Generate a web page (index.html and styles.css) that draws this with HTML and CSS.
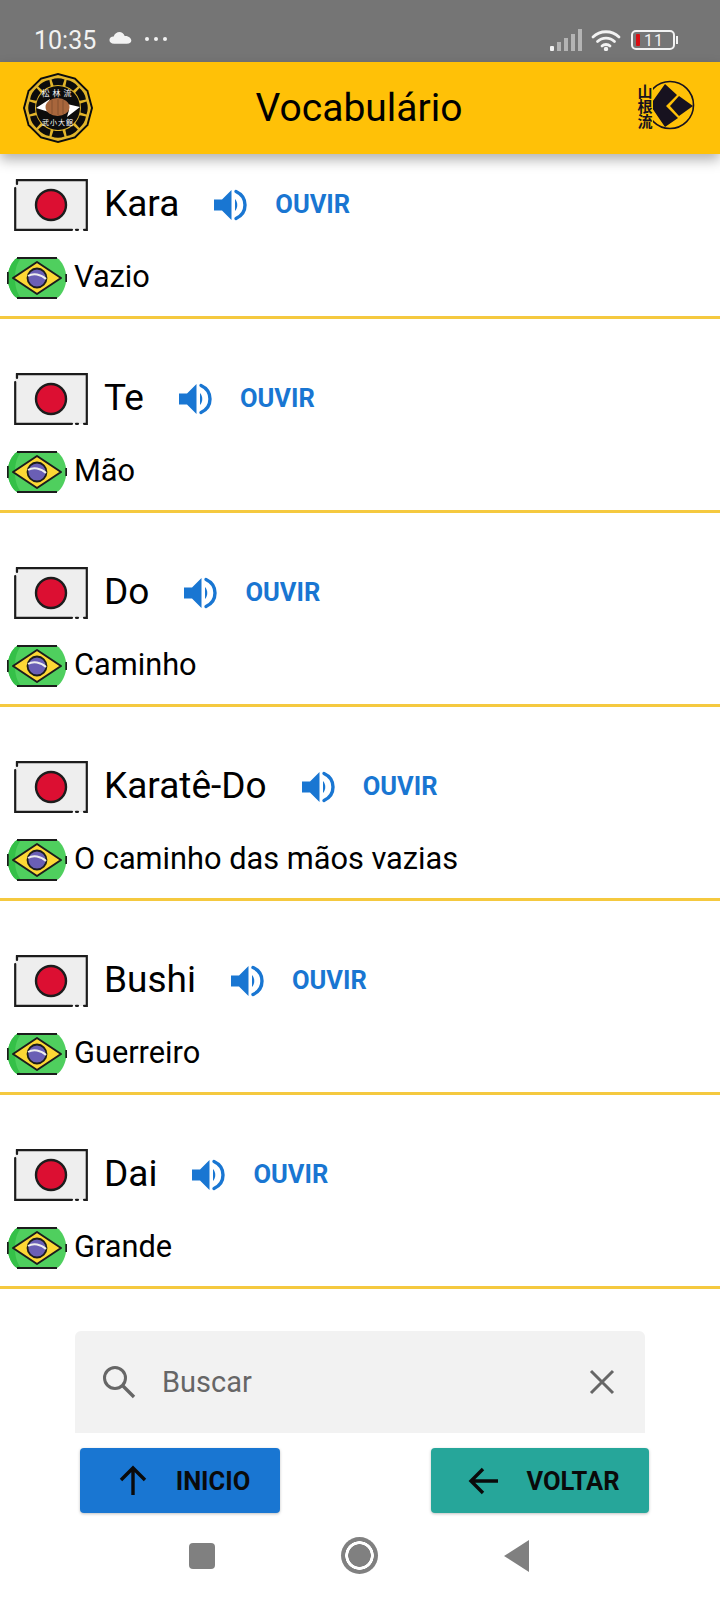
FILE: index.html
```html
<!DOCTYPE html>
<html lang="pt-BR">
<head>
    <meta charset="UTF-8">
    <meta name="viewport" content="width=device-width, initial-scale=1.0">
    <title>Vocabulário</title>
    <link rel="stylesheet" href="styles.css">
</head>
<body>
    <!-- shared icons -->
    <svg class="icon-defs" width="0" height="0" aria-hidden="true">
        <symbol id="flag-jp" viewBox="0 0 74 52">
            <rect x="1" y="1" width="72" height="50" fill="#eeeeee"/>
            <path d="M3 5V1.200H72.800V50.800H70M64 50.800H62M58 50.800H1.200V9" fill="none" stroke="#1c1c1c" stroke-width="2.200" stroke-linecap="round"/>
            <circle cx="37" cy="26" r="15" fill="#dc0f32" stroke="#1c1c1c" stroke-width="2.400"/>
        </symbol>
        <symbol id="flag-br" viewBox="0 0 60 42">
            <path d="M10 1H50C55 4 59 12 59.500 21C59 30 55 38 50 41H10C5 38 1 30 .5 21C1 12 5 4 10 1Z" fill="#4fcf5e"/>
            <path d="M10 1C5 4 1 12 .5 21C1 30 5 38 10 41H14C10 36 8 30 8 21C8 12 10 6 14 1Z" fill="#35c048"/>
            <path d="M10 1H50M10 41H50M.8 15V27M59.200 17V25" fill="none" stroke="#1c1c1c" stroke-width="1.800"/>
            <path d="M30 5L54 21L30 37L6 21Z" fill="#fdd835" stroke="#1c1c1c" stroke-width="2" stroke-linejoin="round"/>
            <circle cx="30" cy="21" r="9.500" fill="#6a5fb5" stroke="#1c1c1c" stroke-width="1.800"/>
            <path d="M21 19C26 16 34 17 39 22" fill="none" stroke="#eeeeee" stroke-width="2"/>
        </symbol>
        <symbol id="speaker" viewBox="0 0 34 32">
            <path d="M0 10.500H8L17.500 1V31L8 21.500H0Z" fill="#1976d2"/>
            <path d="M21 10C24 13 24 19 21 22Z" fill="#1976d2"/>
            <path d="M22 2.500C34 8 34 24 22 29.500" fill="none" stroke="#1976d2" stroke-width="3.400" stroke-linecap="round"/>
        </symbol>
        <path id="lobe" d="M28.500 6.500Q35 4 41.500 6.500L39.500 12.500Q35 11.500 30.500 12.500Z" fill="#0c0c0c"/>
    </svg>

    <div class="status-bar">
        <span class="status-time">10:35</span>
        <svg class="status-cloud" viewBox="0 0 22 12"><path d="M5 12C-1 12-1 5 4.500 5C6 0 13 -1 15 4.500C22 4 24 12 17 12Z" fill="#f2f2f2"/></svg>
        <span class="status-dots"><i></i><i></i><i></i></span>
        <span class="status-right">
            <svg class="status-signal" viewBox="0 0 32 22">
                <rect x="0" y="17" width="4" height="5" rx="1" fill="#f2f2f2"/>
                <rect x="7" y="13" width="4" height="9" fill="#b4b4b4"/>
                <rect x="14" y="9" width="4" height="13" fill="#b4b4b4"/>
                <rect x="21" y="5" width="4" height="17" fill="#b4b4b4"/>
                <rect x="28" y="0" width="4" height="22" fill="#b4b4b4"/>
            </svg>
            <svg class="status-wifi" viewBox="0 0 30 22">
                <path d="M2 8C9 1 21 1 28 8M6.500 12.500C11 8 19 8 23.500 12.500M11 17C13 15 17 15 19 17" fill="none" stroke="#f2f2f2" stroke-width="2.800" stroke-linecap="round"/>
                <circle cx="15" cy="20" r="2.200" fill="#f2f2f2"/>
            </svg>
            <span class="battery"><i class="battery-low"></i><span>11</span></span>
            <i class="battery-tip"></i>
        </span>
    </div>

    <header class="app-bar">
        <svg class="logo-left" viewBox="0 0 70 70">
            <polygon points="35,0 52.500,4.700 65.300,17.500 70,35 65.300,52.500 52.500,65.300 35,70 17.500,65.300 4.700,52.500 0,35 4.700,17.500 17.500,4.700" fill="#0c0c0c"/>
            <polygon points="35,2 51.500,6.400 63.600,18.500 68,35 63.600,51.500 51.500,63.600 35,68 18.500,63.600 6.400,51.500 2,35 6.400,18.500 18.500,6.400" fill="#e2b52a"/>
            <use href="#lobe"/>
            <use href="#lobe" transform="rotate(30 35 35)"/>
            <use href="#lobe" transform="rotate(60 35 35)"/>
            <use href="#lobe" transform="rotate(90 35 35)"/>
            <use href="#lobe" transform="rotate(120 35 35)"/>
            <use href="#lobe" transform="rotate(150 35 35)"/>
            <use href="#lobe" transform="rotate(180 35 35)"/>
            <use href="#lobe" transform="rotate(210 35 35)"/>
            <use href="#lobe" transform="rotate(240 35 35)"/>
            <use href="#lobe" transform="rotate(270 35 35)"/>
            <use href="#lobe" transform="rotate(300 35 35)"/>
            <use href="#lobe" transform="rotate(330 35 35)"/>
            <circle cx="35" cy="35" r="22" fill="#0c0c0c"/>
            <text x="35" y="23" class="logo-kanji" text-anchor="middle">松林流</text>
            <text x="35" y="52" class="logo-kanji logo-kanji-low" text-anchor="middle">武小大館</text>
            <path d="M13 35L27 26L24 33L26 39ZM57 34L44 44L46 37L44 31Z" fill="#ffffff"/>
            <ellipse cx="34.500" cy="34" rx="12" ry="9" fill="#a8663c"/>
            <path d="M29 27V41M35 26V42M40 27V41" stroke="#84502f" stroke-width="1"/>
        </svg>
        <h1>Vocabulário</h1>
        <svg class="logo-right" viewBox="15 13 60 60">
            <circle cx="50" cy="40" r="23.500" fill="none" stroke="#17121f" stroke-width="1.600"/>
            <path d="M45 19L57 30L46 41L58 53L45 62L30 40Z" fill="#17121f"/>
            <path d="M59 31L73 41L59 51L50 41Z" fill="#17121f"/>
            <rect x="17" y="18" width="16" height="46" fill="#ffc107"/>
            <text class="logo-mark" x="25" y="19" writing-mode="vertical-rl">山根流</text>
        </svg>
    </header>

    <main class="term-list">
        <section class="term">
            <div class="term-jp">
                <svg class="flag-jp"><use href="#flag-jp"/></svg>
                <span class="word">Kara</span>
                <button class="listen"><svg class="speaker"><use href="#speaker"/></svg>OUVIR</button>
            </div>
            <div class="term-br">
                <svg class="flag-br"><use href="#flag-br"/></svg>
                <span class="meaning">Vazio</span>
            </div>
        </section>
        <section class="term">
            <div class="term-jp">
                <svg class="flag-jp"><use href="#flag-jp"/></svg>
                <span class="word">Te</span>
                <button class="listen"><svg class="speaker"><use href="#speaker"/></svg>OUVIR</button>
            </div>
            <div class="term-br">
                <svg class="flag-br"><use href="#flag-br"/></svg>
                <span class="meaning">Mão</span>
            </div>
        </section>
        <section class="term">
            <div class="term-jp">
                <svg class="flag-jp"><use href="#flag-jp"/></svg>
                <span class="word">Do</span>
                <button class="listen"><svg class="speaker"><use href="#speaker"/></svg>OUVIR</button>
            </div>
            <div class="term-br">
                <svg class="flag-br"><use href="#flag-br"/></svg>
                <span class="meaning">Caminho</span>
            </div>
        </section>
        <section class="term">
            <div class="term-jp">
                <svg class="flag-jp"><use href="#flag-jp"/></svg>
                <span class="word">Karatê-Do</span>
                <button class="listen"><svg class="speaker"><use href="#speaker"/></svg>OUVIR</button>
            </div>
            <div class="term-br">
                <svg class="flag-br"><use href="#flag-br"/></svg>
                <span class="meaning">O caminho das mãos vazias</span>
            </div>
        </section>
        <section class="term">
            <div class="term-jp">
                <svg class="flag-jp"><use href="#flag-jp"/></svg>
                <span class="word">Bushi</span>
                <button class="listen"><svg class="speaker"><use href="#speaker"/></svg>OUVIR</button>
            </div>
            <div class="term-br">
                <svg class="flag-br"><use href="#flag-br"/></svg>
                <span class="meaning">Guerreiro</span>
            </div>
        </section>
        <section class="term">
            <div class="term-jp">
                <svg class="flag-jp"><use href="#flag-jp"/></svg>
                <span class="word">Dai</span>
                <button class="listen"><svg class="speaker"><use href="#speaker"/></svg>OUVIR</button>
            </div>
            <div class="term-br">
                <svg class="flag-br"><use href="#flag-br"/></svg>
                <span class="meaning">Grande</span>
            </div>
        </section>
    </main>

    <div class="search-box">
        <svg class="search-icon" viewBox="0 0 34 34"><circle cx="13" cy="13" r="10.500" fill="none" stroke="#666666" stroke-width="3"/><path d="M21 21L32 32" stroke="#666666" stroke-width="3.400"/></svg>
        <span class="search-hint">Buscar</span>
        <svg class="search-clear" viewBox="0 0 26 26"><path d="M2 2L24 24M24 2L2 24" stroke="#666666" stroke-width="3"/></svg>
    </div>

    <div class="actions">
        <button class="btn btn-start">
            <svg viewBox="0 0 32 32"><path d="M16 30V3M4 15L16 3L28 15" fill="none" stroke="#0a0a0a" stroke-width="3.400"/></svg>
            INICIO
        </button>
        <button class="btn btn-back">
            <svg viewBox="0 0 32 32"><path d="M30 16H3M15 4L3 16L15 28" fill="none" stroke="#0a0a0a" stroke-width="3.400"/></svg>
            VOLTAR
        </button>
    </div>

    <nav class="nav-bar">
        <i class="nav-square"></i>
        <i class="nav-circle"></i>
        <i class="nav-back"></i>
    </nav>
</body>
</html>
```

FILE: styles.css
```css
* {
    box-sizing: border-box;
}
body {
    font-family: Roboto, sans-serif;
    margin: 0;
    width: 720px;
    height: 1600px;
    overflow: hidden;
    background: #fff;
    color: #000;
    display: flex;
    flex-direction: column;
}
.icon-defs {
    position: absolute;
}

/* status bar */
.status-bar {
    height: 62px;
    flex: none;
    background: #757575;
    color: #f2f2f2;
    display: flex;
    align-items: center;
    padding: 18px 42px 0 34px;
}
.status-time {
    font-size: 25px;
}
.status-cloud {
    width: 23px;
    height: 13px;
    margin-left: 13px;
    margin-bottom: 5px;
}
.status-dots {
    display: flex;
    gap: 5px;
    margin-left: 13px;
    margin-bottom: 2px;
}
.status-dots i {
    width: 4px;
    height: 4px;
    border-radius: 50%;
    background: #f2f2f2;
}
.status-right {
    margin-left: auto;
    display: flex;
    align-items: center;
}
.status-signal {
    width: 32px;
    height: 22px;
}
.status-wifi {
    width: 30px;
    height: 22px;
    margin-left: 9px;
}
.battery {
    width: 44px;
    height: 20px;
    margin-left: 10px;
    border: 2px solid #f2f2f2;
    border-radius: 5px;
    display: flex;
    align-items: center;
    padding-left: 3px;
    font-size: 16px;
    letter-spacing: 1px;
}
.battery span {
    margin-left: 4px;
}
.battery-low {
    width: 4px;
    height: 12px;
    background: #d80d12;
    border-radius: 1px;
}
.battery-tip {
    width: 2px;
    height: 8px;
    margin-left: 1px;
    background: #f2f2f2;
}

/* app bar */
.app-bar {
    height: 92px;
    flex: none;
    background: #ffc107;
    box-shadow: 0 6px 12px rgba(0, 0, 0, 0.3);
    display: grid;
    grid-template-columns: 1fr auto 1fr;
    align-items: center;
    padding: 0 25px 0 23px;
    position: relative;
    z-index: 1;
}
.app-bar h1 {
    margin: 0;
    text-align: center;
    font-size: 39px;
    font-weight: 400;
}
.logo-left {
    width: 70px;
    height: 70px;
}
.logo-right {
    width: 60px;
    height: 60px;
    justify-self: end;
}
.logo-kanji {
    font-family: "Noto Sans CJK JP", sans-serif;
    font-size: 8px;
    letter-spacing: 3px;
    fill: #fff;
}
.logo-kanji-low {
    font-size: 7px;
    letter-spacing: 1px;
}
.logo-mark {
    font-family: "Noto Sans CJK JP", sans-serif;
    font-size: 15px;
    font-weight: 700;
    fill: #17121f;
}

/* word list */
.term-list {
    height: 1136px;
    flex: none;
    overflow: hidden;
    margin-bottom: 41px;
}
.term {
    height: 194px;
    border-bottom: 3px solid #f5c93f;
    padding-top: 54px;
}
.term:first-child {
    height: 165px;
    padding-top: 25px;
}
.term-jp {
    display: flex;
    align-items: center;
    height: 52px;
    padding-left: 14px;
}
.flag-jp {
    width: 74px;
    height: 52px;
}
.word {
    font-size: 37px;
    margin-left: 16px;
    margin-bottom: 3px;
}
.listen {
    display: flex;
    align-items: center;
    gap: 27px;
    margin-left: 35px;
    margin-bottom: 2px;
    padding: 0;
    border: none;
    background: none;
    color: #1976d2;
    font-family: inherit;
    font-size: 25.500px;
    font-weight: 700;
}
.speaker {
    width: 34px;
    height: 32px;
    margin-top: 2px;
}
.term-br {
    display: flex;
    align-items: center;
    height: 42px;
    margin-top: 26px;
    padding-left: 7px;
}
.flag-br {
    width: 60px;
    height: 42px;
}
.meaning {
    font-size: 30.750px;
    margin-left: 7px;
    margin-bottom: 3px;
}

/* search */
.search-box {
    height: 102px;
    flex: none;
    width: 570px;
    margin-left: 75px;
    background: #f2f2f2;
    border-radius: 6px 6px 0 0;
    display: flex;
    align-items: center;
    padding: 0 30px 0 27px;
}
.search-icon {
    width: 34px;
    height: 34px;
}
.search-hint {
    font-size: 29px;
    color: #666;
    margin-left: 26px;
}
.search-clear {
    width: 26px;
    height: 26px;
    margin-left: auto;
}

/* bottom buttons */
.actions {
    display: flex;
    justify-content: space-between;
    flex: none;
    height: 65px;
    margin: 15px 71px 0 80px;
}
.btn {
    display: flex;
    align-items: center;
    justify-content: center;
    gap: 27px;
    border: none;
    border-radius: 4px;
    box-shadow: 0 1px 3px rgba(0, 0, 0, 0.25);
    color: #0a0a0a;
    font-family: inherit;
    font-size: 25.500px;
    font-weight: 700;
}
.btn svg {
    width: 32px;
    height: 32px;
}
.btn-start {
    width: 200px;
    padding-left: 13px;
    background: #1976d2;
}
.btn-back {
    width: 218px;
    padding-left: 13px;
    background: #26a69a;
}

/* android nav */
.nav-bar {
    flex: 1;
    position: relative;
}
.nav-bar i {
    position: absolute;
    top: 30px;
}
.nav-square {
    left: 189px;
    width: 26px;
    height: 26px;
    border-radius: 4px;
    background: #808080;
}
.nav-circle {
    left: 341px;
    width: 37px;
    height: 37px;
    margin-top: -6px;
    border-radius: 50%;
    background: radial-gradient(circle, #808080 0 11px, #fff 11.500px 14px, #808080 14.500px);
}
.nav-back {
    left: 504px;
    width: 25px;
    height: 32px;
    margin-top: -3px;
    background: #808080;
    clip-path: polygon(100% 0, 100% 100%, 0 50%);
}
```
